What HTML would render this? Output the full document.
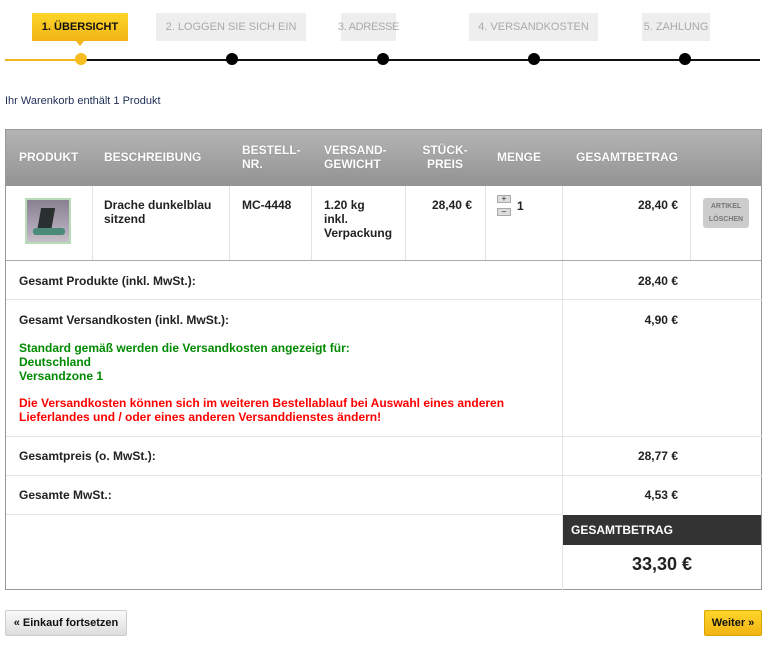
<!DOCTYPE html>
<html><head><meta charset="utf-8"><style>
*{margin:0;padding:0;box-sizing:border-box}
body{width:777px;height:645px;background:#fff;font-family:"Liberation Sans",Arial,sans-serif;position:relative;overflow:hidden;color:#222}
.a{position:absolute}
.step{position:absolute;top:13px;height:28px;background:#eee;color:#aaa;font-size:11px;line-height:28px;text-align:center;white-space:nowrap}
.step span{position:absolute;left:50%;transform:translateX(-50%)}
.dot{position:absolute;top:53px;width:12px;height:12px;border-radius:50%;background:#000}
.b{font-weight:bold;font-size:12px;line-height:14px}
.th{position:absolute;top:129px;height:57px;color:#fff;font-weight:bold;font-size:12px;line-height:14px;text-shadow:0 0 1px #777}
.vl{position:absolute;width:1px;background:#e4e4e4}
.hl{position:absolute;height:1px;background:#e4e4e4;left:6px;width:756px}
</style></head><body>
<div class="a" style="left:5px;top:59px;width:755px;height:2px;background:#111"></div>
<div class="a" style="left:5px;top:59px;width:76px;height:2px;background:#f0b820"></div>
<div class="step" style="left:32px;width:96px;background:linear-gradient(#fdd52a,#f2b414);color:#111;font-weight:bold"><span>1. ÜBERSICHT</span></div>
<div class="a" style="left:76px;top:41px;width:0;height:0;border-left:4px solid transparent;border-right:4px solid transparent;border-top:5px solid #f3b716"></div>
<div class="step" style="left:156px;width:150px"><span>2. LOGGEN SIE SICH EIN</span></div>
<div class="step" style="left:341px;width:55px"><span style="letter-spacing:-0.3px">3. ADRESSE</span></div>
<div class="step" style="left:469px;width:129px"><span>4. VERSANDKOSTEN</span></div>
<div class="step" style="left:642px;width:68px"><span>5. ZAHLUNG</span></div>
<div class="dot" style="left:75px;background:#f5be1e"></div>
<div class="dot" style="left:226px"></div>
<div class="dot" style="left:377px"></div>
<div class="dot" style="left:528px"></div>
<div class="dot" style="left:679px"></div>
<div class="a" style="left:5px;top:95px;font-size:11px;color:#1d2d55">Ihr Warenkorb enthält 1 Produkt</div>

<div class="a" style="left:5px;top:129px;width:757px;height:461px;border:1px solid #999"></div>
<div class="a" style="left:6px;top:130px;width:755px;height:56px;background:linear-gradient(#b4b4b4,#939393)"></div>
<div class="th" style="left:19px;line-height:57px">PRODUKT</div>
<div class="th" style="left:104px;line-height:57px">BESCHREIBUNG</div>
<div class="th" style="left:242px;padding-top:14px">BESTELL-<br>NR.</div>
<div class="th" style="left:324px;padding-top:14px">VERSAND-<br>GEWICHT</div>
<div class="th" style="left:405px;width:80px;text-align:center;padding-top:14px">STÜCK-<br>PREIS</div>
<div class="th" style="left:497px;line-height:57px">MENGE</div>
<div class="th" style="left:576px;line-height:57px">GESAMTBETRAG</div>

<div class="vl" style="left:92px;top:186px;height:75px"></div>
<div class="vl" style="left:229px;top:186px;height:75px"></div>
<div class="vl" style="left:311px;top:186px;height:75px"></div>
<div class="vl" style="left:405px;top:186px;height:75px"></div>
<div class="vl" style="left:485px;top:186px;height:75px"></div>
<div class="vl" style="left:562px;top:186px;height:404px"></div>
<div class="vl" style="left:690px;top:186px;height:75px"></div>
<div class="a" style="left:6px;top:260px;width:756px;height:1px;background:#aaa"></div>
<div class="hl" style="top:299px"></div>
<div class="hl" style="top:436px"></div>
<div class="hl" style="top:475px"></div>
<div class="hl" style="top:514px;width:556px"></div>

<div class="a" style="left:25px;top:198px;width:46px;height:46px;border:2px solid #b8dcb8;background:linear-gradient(#8a8090,#b0a8b8 70%,#c8c0c8)">
<div class="a" style="left:12px;top:8px;width:14px;height:24px;background:#2a3030;transform:skew(-10deg)"></div>
<div class="a" style="left:6px;top:28px;width:32px;height:7px;background:#4a8a78;border-radius:3px"></div>
</div>
<div class="a b" style="left:104px;top:198px">Drache dunkelblau<br>sitzend</div>
<div class="a b" style="left:242px;top:198px">MC-4448</div>
<div class="a b" style="left:324px;top:198px">1.20 kg<br>inkl.<br>Verpackung</div>
<div class="a b" style="left:405px;top:198px;width:67px;text-align:right">28,40 €</div>
<div class="a" style="left:497px;top:195px;width:14px;height:8px;background:#ddd;border:1px solid #aaa;font-size:8px;line-height:6px;text-align:center">+</div>
<div class="a" style="left:497px;top:208px;width:14px;height:8px;background:#ddd;border:1px solid #aaa;font-size:8px;line-height:6px;text-align:center">–</div>
<div class="a b" style="left:517px;top:199px">1</div>
<div class="a b" style="left:562px;top:198px;width:116px;text-align:right">28,40 €</div>
<div class="a" style="left:703px;top:198px;width:46px;height:30px;background:#ccc;border-radius:3px;color:#777;font-size:7px;font-weight:bold;line-height:13px;text-align:center;padding-top:2px">ARTIKEL<br>LÖSCHEN</div>

<div class="a b" style="left:19px;top:274px">Gesamt Produkte (inkl. MwSt.):</div>
<div class="a b" style="left:562px;top:274px;width:116px;text-align:right">28,40 €</div>
<div class="a b" style="left:19px;top:313px">Gesamt Versandkosten (inkl. MwSt.):</div>
<div class="a b" style="left:562px;top:313px;width:116px;text-align:right">4,90 €</div>
<div class="a b" style="left:19px;top:341px;color:#008a00">Standard gemäß werden die Versandkosten angezeigt für:<br>Deutschland<br>Versandzone 1</div>
<div class="a b" style="left:19px;top:396px;color:#f00">Die Versandkosten können sich im weiteren Bestellablauf bei Auswahl eines anderen<br>Lieferlandes und / oder eines anderen Versanddienstes ändern!</div>
<div class="a b" style="left:19px;top:449px">Gesamtpreis (o. MwSt.):</div>
<div class="a b" style="left:562px;top:449px;width:116px;text-align:right">28,77 €</div>
<div class="a b" style="left:19px;top:488px">Gesamte MwSt.:</div>
<div class="a b" style="left:562px;top:488px;width:116px;text-align:right">4,53 €</div>
<div class="a b" style="left:563px;top:515px;width:198px;height:30px;background:#333;color:#fff;line-height:30px;padding-left:8px;font-size:12px">GESAMTBETRAG</div>
<div class="a" style="left:563px;top:554px;width:198px;text-align:center;font-weight:bold;font-size:18px;color:#222">33,30 €</div>

<div class="a" style="left:5px;top:610px;width:122px;height:26px;border:1px solid #ccc;border-radius:2px;background:linear-gradient(#fafafa,#ddd);font-weight:bold;font-size:11px;line-height:24px;text-align:center;color:#111">« Einkauf fortsetzen</div>
<div class="a" style="left:704px;top:610px;width:58px;height:26px;border:1px solid #d9a500;border-radius:2px;background:linear-gradient(#fed52a,#f2b414);font-weight:bold;font-size:11px;line-height:24px;text-align:center;color:#111">Weiter »</div>
</body></html>
